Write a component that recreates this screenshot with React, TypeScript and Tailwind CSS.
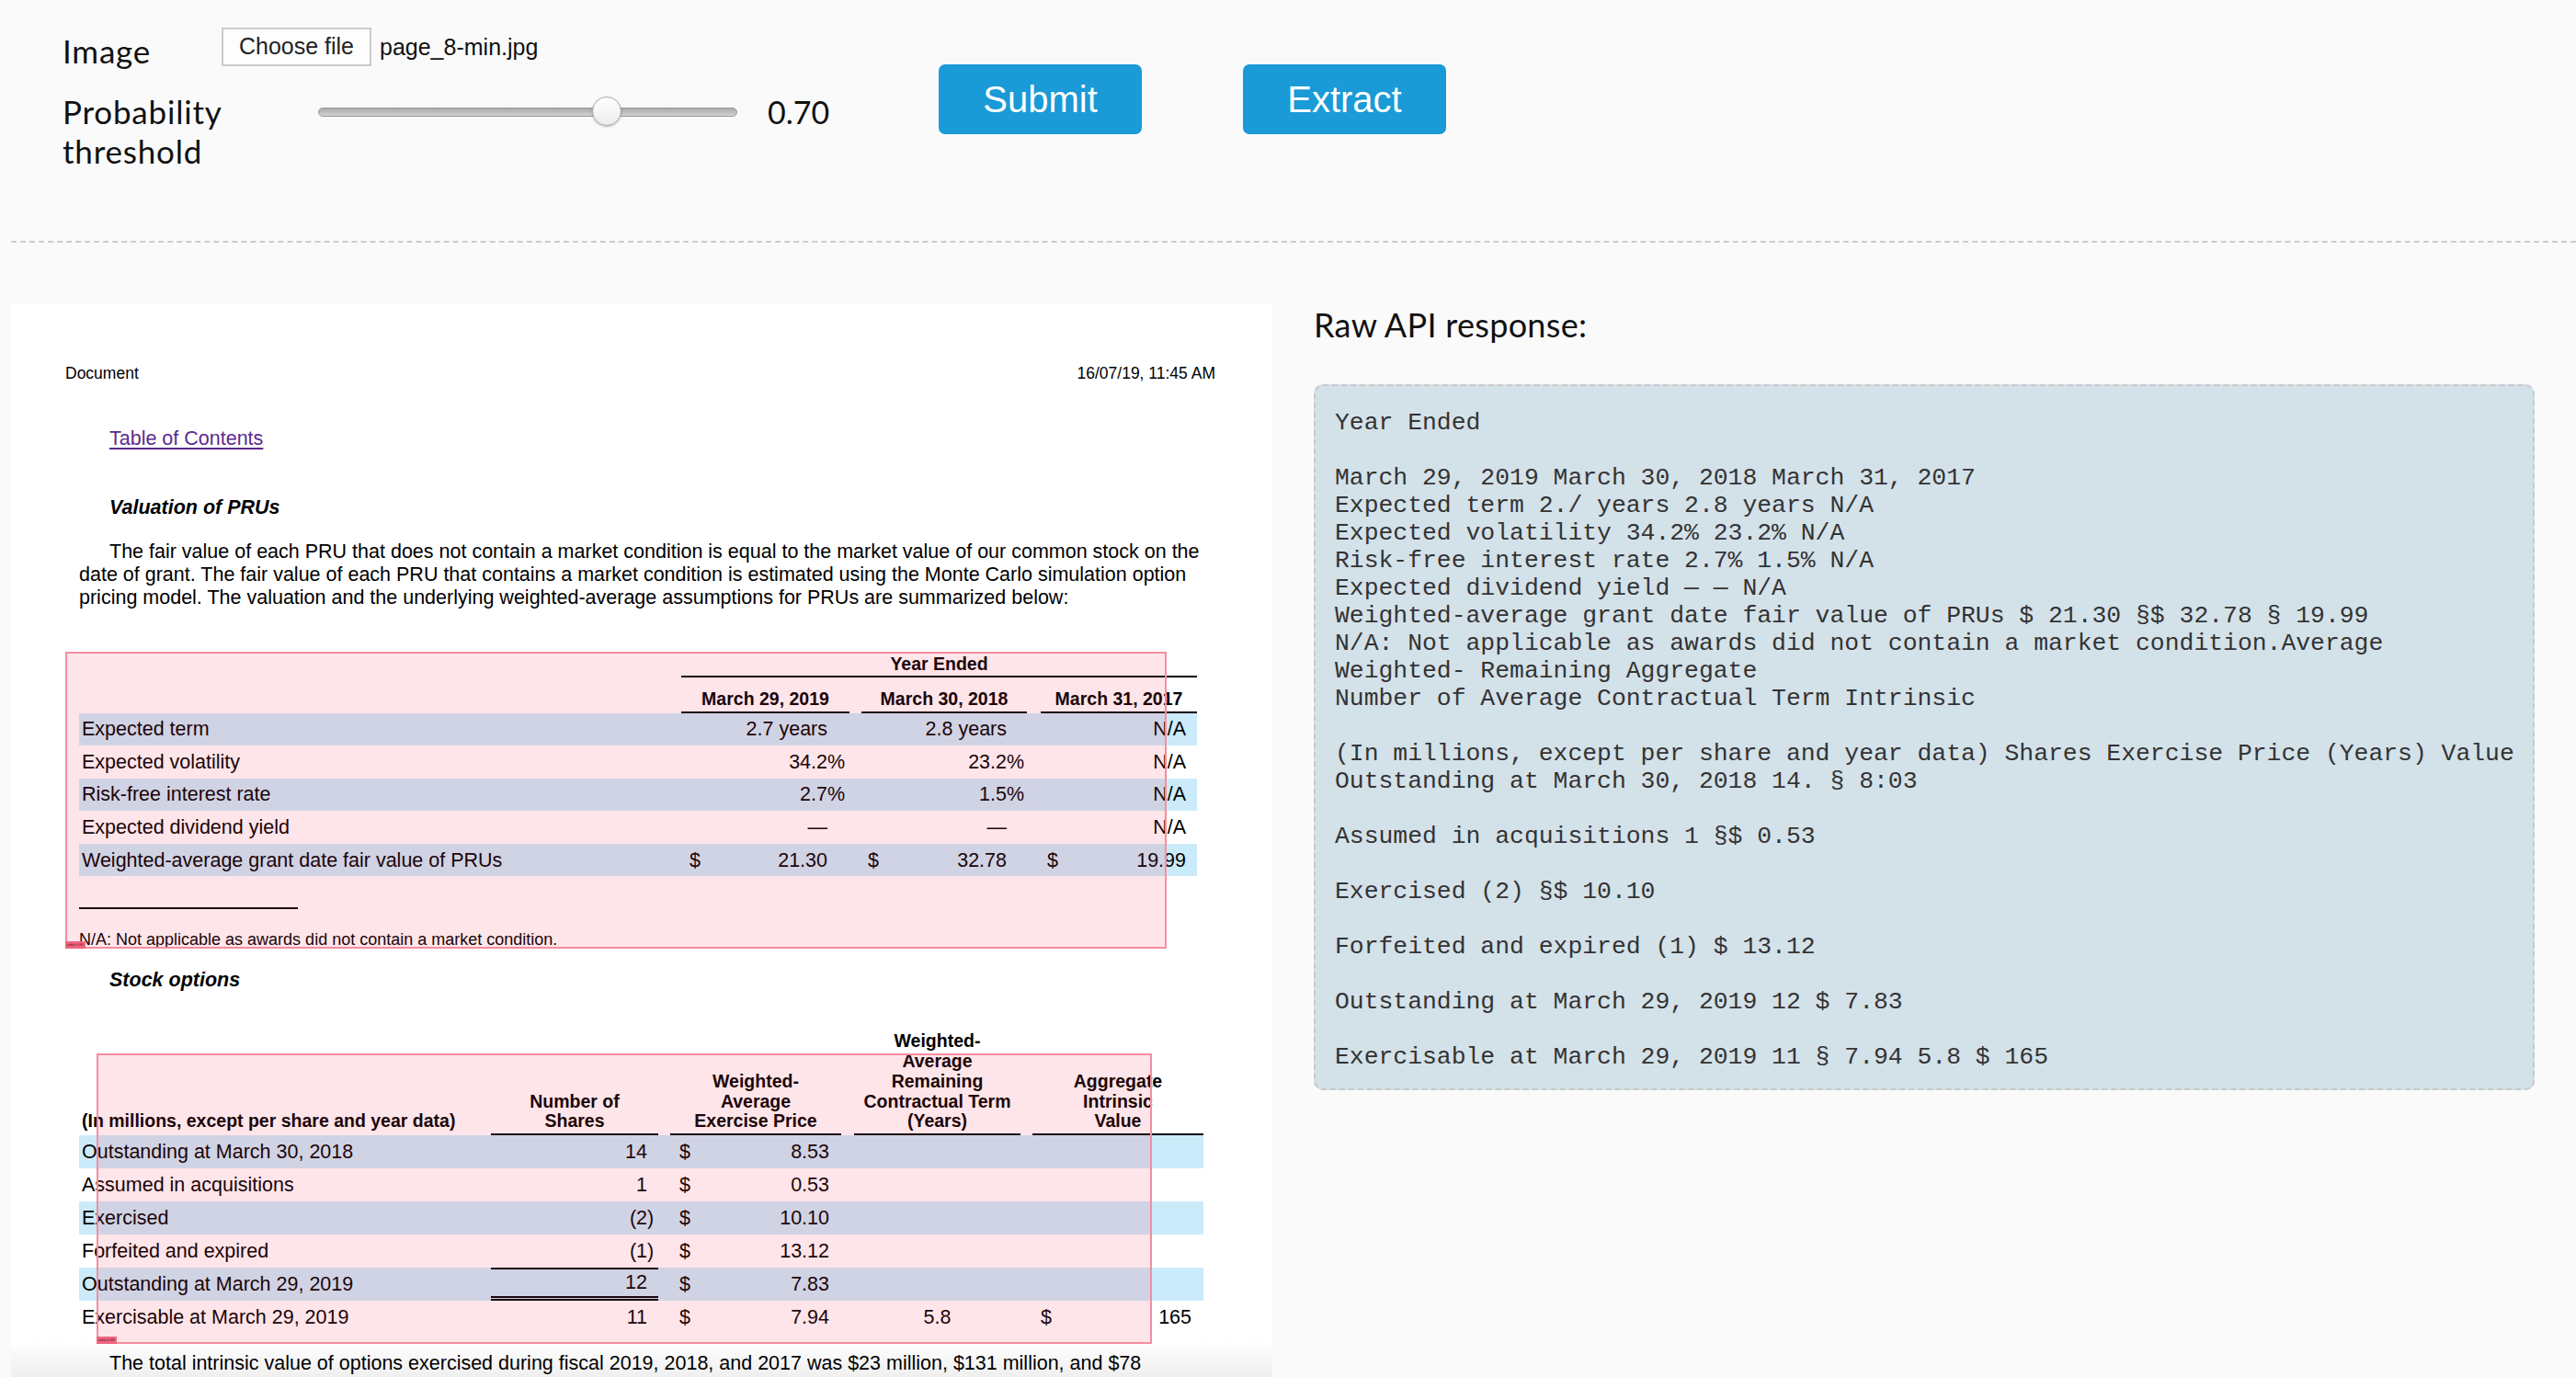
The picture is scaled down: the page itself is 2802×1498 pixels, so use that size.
import React from 'react'

const rawLines = [
  'Year Ended',
  '',
  'March 29, 2019 March 30, 2018 March 31, 2017',
  'Expected term 2./ years 2.8 years N/A',
  'Expected volatility 34.2% 23.2% N/A',
  'Risk-free interest rate 2.7% 1.5% N/A',
  'Expected dividend yield — — N/A',
  'Weighted-average grant date fair value of PRUs $ 21.30 §$ 32.78 § 19.99',
  'N/A: Not applicable as awards did not contain a market condition.Average',
  'Weighted- Remaining Aggregate',
  'Number of Average Contractual Term Intrinsic',
  '',
  '(In millions, except per share and year data) Shares Exercise Price (Years) Value',
  'Outstanding at March 30, 2018 14. § 8:03',
  '',
  'Assumed in acquisitions 1 §$ 0.53',
  '',
  'Exercised (2) §$ 10.10',
  '',
  'Forfeited and expired (1) $ 13.12',
  '',
  'Outstanding at March 29, 2019 12 $ 7.83',
  '',
  'Exercisable at March 29, 2019 11 § 7.94 5.8 $ 165',
]

type PruRow = {
  label: string
  values: [string, string, string]
  suffix?: [string, string]
  dollar?: boolean
  band?: boolean
}

const pruRows: PruRow[] = [
  { label: 'Expected term', values: ['2.7 years', '2.8 years', 'N/A'], band: true },
  { label: 'Expected volatility', values: ['34.2', '23.2', 'N/A'], suffix: ['%', '%'] },
  { label: 'Risk-free interest rate', values: ['2.7', '1.5', 'N/A'], suffix: ['%', '%'], band: true },
  { label: 'Expected dividend yield', values: ['—', '—', 'N/A'] },
  { label: 'Weighted-average grant date fair value of PRUs', values: ['21.30', '32.78', '19.99'], dollar: true, band: true },
]

type OptionRow = {
  label: string
  shares: string
  neg?: boolean
  price: string
  term?: string
  agg?: string
  band?: boolean
  total?: boolean
}

const optionRows: OptionRow[] = [
  { label: 'Outstanding at March 30, 2018', shares: '14', price: '8.53', band: true },
  { label: 'Assumed in acquisitions', shares: '1', price: '0.53' },
  { label: 'Exercised', shares: '(2', neg: true, price: '10.10', band: true },
  { label: 'Forfeited and expired', shares: '(1', neg: true, price: '13.12' },
  { label: 'Outstanding at March 29, 2019', shares: '12', price: '7.83', band: true, total: true },
  { label: 'Exercisable at March 29, 2019', shares: '11', price: '7.94', term: '5.8', agg: '165' },
]

const Overlay = ({ className }: { className: string }) => (
  <div className={`absolute border-2 border-[#f48ea0] bg-[rgba(240,40,70,0.12)] ${className}`}>
    <div className="absolute -left-[2px] -bottom-[2px] w-[22px] h-[8px] bg-[#f0657f] text-[4px] leading-[8px] text-[#5a1020] pl-[2px]">
      table 0.99
    </div>
  </div>
)

const PruTable = () => (
  <div className="mt-[46.5px] ml-[74px] w-[1216px] text-[21.5px]">
    <div className="flex h-[26px]">
      <div className="w-[655px]" />
      <div className="w-[561px] text-center font-bold text-[19.5px] leading-[26px]">Year Ended</div>
    </div>
    <div className="flex h-[40.5px]">
      <div className="w-[655px]" />
      <div className="w-[561px] border-t-2 border-black flex">
        <div className="w-[183px] text-center font-bold text-[19.5px] border-b-2 border-black leading-[30px] pt-[7.5px]">March 29, 2019</div>
        <div className="w-[180px] ml-[13px] text-center font-bold text-[19.5px] border-b-2 border-black leading-[30px] pt-[7.5px]">March 30, 2018</div>
        <div className="w-[170px] ml-[15px] text-center font-bold text-[19.5px] border-b-2 border-black leading-[30px] pt-[7.5px]">March 31, 2017</div>
      </div>
    </div>
    {pruRows.map((r) => (
      <div key={r.label} className={`flex items-center h-[35.6px] ${r.band ? 'bg-[#ccebfa]' : ''}`}>
        <div className="w-[655px] pl-[3px]">{r.label}</div>
        <div className="w-[183px] flex items-center pl-[9px] pr-[4px]">
          {r.dollar && <span>$</span>}
          <span className="ml-auto">{r.values[0]}</span>
          <span className="w-[20px]">{r.suffix ? r.suffix[0] : ''}</span>
        </div>
        <div className="w-[180px] ml-[13px] flex items-center pl-[7px] pr-[2px]">
          {r.dollar && <span>$</span>}
          <span className="ml-auto">{r.values[1]}</span>
          <span className="w-[20px]">{r.suffix ? r.suffix[1] : ''}</span>
        </div>
        <div className="w-[170px] ml-[15px] flex items-center pl-[7px] pr-[12px]">
          {r.dollar && <span>$</span>}
          <span className="ml-auto">{r.values[2]}</span>
        </div>
      </div>
    ))}
    <div className="mt-[34px] w-[238px] border-t-2 border-black" />
    <div className="mt-[22.5px] text-[18px] leading-[21px]">N/A: Not applicable as awards did not contain a market condition.</div>
  </div>
)

const HeadCell = ({ lines, className }: { lines: string[]; className: string }) => (
  <div className={`flex flex-col justify-end text-center font-bold text-[19.5px] leading-[21.7px] border-b-2 border-black pb-[2px] ${className}`}>
    {lines.map((l) => (
      <div key={l}>{l}</div>
    ))}
  </div>
)

const OptionsTable = () => (
  <div className="mt-[39px] ml-[74px] w-[1223px] text-[21.5px]">
    <div className="flex h-[117px]">
      <div className="w-[448px] flex items-end pl-[3px] pb-[4px] font-bold text-[19.5px] leading-[21.7px]">
        (In millions, except per share and year data)
      </div>
      <HeadCell className="w-[182px]" lines={['Number of', 'Shares']} />
      <HeadCell className="w-[186px] ml-[13px]" lines={['Weighted-', 'Average', 'Exercise Price']} />
      <HeadCell className="w-[181px] ml-[14px]" lines={['Weighted-', 'Average', 'Remaining', 'Contractual Term', '(Years)']} />
      <HeadCell className="w-[186px] ml-[13px]" lines={['Aggregate', 'Intrinsic', 'Value']} />
    </div>
    {optionRows.map((r) => (
      <div key={r.label} className={`flex h-[36px] ${r.band ? 'bg-[#ccebfa]' : ''}`}>
        <div className="w-[448px] pl-[3px] flex items-center">{r.label}</div>
        <div
          className={`w-[182px] flex items-center justify-end pr-[4px] ${
            r.total ? 'border-t-2 border-b-[5px] border-double border-black' : ''
          }`}
        >
          <span>{r.shares}</span>
          <span className="w-[8px]">{r.neg ? ')' : ''}</span>
        </div>
        <div className="w-[186px] ml-[13px] flex items-center pl-[10px] pr-[13px]">
          <span>$</span>
          <span className="ml-auto">{r.price}</span>
        </div>
        <div className="w-[181px] ml-[14px] flex items-center justify-center">{r.term ?? ''}</div>
        <div className="w-[186px] ml-[13px] flex items-center pl-[9px] pr-[13px]">
          {r.agg && <span>$</span>}
          <span className="ml-auto">{r.agg ?? ''}</span>
        </div>
      </div>
    ))}
  </div>
)

const DocumentPage = () => (
  <div className="relative w-[1372px] h-[1168px] shrink-0 overflow-hidden bg-[linear-gradient(to_bottom,#ffffff_calc(100%-40px),#efefef)] text-black font-['Liberation_Sans',Arial,sans-serif]">
    <div className="pt-[66px] flex justify-between pl-[59px] pr-[62px] text-[17.5px] leading-[21px]">
      <span>Document</span>
      <span>16/07/19, 11:45 AM</span>
    </div>
    <div className="mt-[47.5px] ml-[107px] text-[21.5px] leading-[25px]">
      <a className="text-[#5b2a8f] underline decoration-[1.5px] underline-offset-[3px]">Table of Contents</a>
    </div>
    <div className="mt-[50px] ml-[107px] text-[21.5px] leading-[25px] font-bold italic">Valuation of PRUs</div>
    <p className="mt-[23px] ml-[74px] text-[21.5px] leading-[25px] indent-[33px] whitespace-nowrap">
      The fair value of each PRU that does not contain a market condition is equal to the market value of our common stock on the
      <br />
      date of grant. The fair value of each PRU that contains a market condition is estimated using the Monte Carlo simulation option
      <br />
      pricing model. The valuation and the underlying weighted-average assumptions for PRUs are summarized below:
    </p>
    <PruTable />
    <div className="mt-[21px] ml-[107px] text-[21.5px] leading-[25px] font-bold italic">Stock options</div>
    <OptionsTable />
    <div className="mt-[20px] ml-[107px] text-[21.5px] leading-[25px] whitespace-nowrap">
      The total intrinsic value of options exercised during fiscal 2019, 2018, and 2017 was $23 million, $131 million, and $78
    </div>

    <Overlay className="left-[59px] top-[379px] w-[1198px] h-[323px]" />
    <Overlay className="left-[93px] top-[816px] w-[1148px] h-[316px]" />
  </div>
)

const BlueButton = ({ label }: { label: string }) => (
  <button className="w-[221px] h-[76px] rounded-[7px] bg-[#1a9ad6] text-white text-[40px] font-['Liberation_Sans',Arial,sans-serif] flex items-center justify-center">
    {label}
  </button>
)

export default function App() {
  return (
    <div className="min-h-screen bg-[#fafafa] text-[#111] font-['Lato',sans-serif]">
      <header className="flex pl-[68px] pt-[30px] h-[262px]">
        <div className="w-[831px] shrink-0">
          <div className="flex items-start h-[42px]">
            <div className="w-[173px] text-[35px] leading-[42px] mt-[4px] tracking-[0.8px]">Image</div>
            <div className="h-[42px] w-[163px] border-2 border-[#cbcbcb] bg-[#fdfdfd] flex items-center justify-center font-['Liberation_Sans',Arial,sans-serif] text-[25px] text-[#222]">
              Choose file
            </div>
            <span className="ml-[9px] font-['Liberation_Sans',Arial,sans-serif] text-[25px] leading-[42px] text-[#111]">page_8-min.jpg</span>
          </div>
          <div className="flex items-start mt-[28px]">
            <div className="w-[278px] text-[35px] leading-[43px] tracking-[0.8px]">
              Probability
              <br />
              threshold
            </div>
            <div className="relative w-[456px] h-[43px] flex items-center">
              <div className="w-full h-[10px] rounded-full border border-[#9a9a9a] bg-linear-to-b from-[#a9a9a9] to-[#d4d4d4]" />
              <div className="absolute left-[298px] top-[5px] w-[32px] h-[32px] rounded-full border border-[#a8a8a8] bg-linear-to-b from-white to-[#ececec] shadow-[0_1px_2px_rgba(0,0,0,0.25)]" />
            </div>
            <div className="ml-[33px] w-[64px] text-[34px] leading-[43px]">0.70</div>
          </div>
        </div>
        <div className="flex ml-[122px] mt-[40px] gap-[110px] items-start">
          <BlueButton label="Submit" />
          <BlueButton label="Extract" />
        </div>
      </header>

      <div className="ml-[12px] border-t-2 border-dashed border-[#cccccc]" />

      <main className="flex pl-[12px] pt-[66px]">
        <DocumentPage />
        <section className="ml-[45px] w-[1328px] shrink-0">
          <h3 className="mt-[3px] text-[36px] leading-[40px] tracking-[0.3px]">Raw API response:</h3>
          <div className="mt-[45px] rounded-[10px] border-2 border-dashed border-[#c9c9c9] bg-[#d3e1e9] px-[21px] pt-[24.5px] pb-[19.5px]">
            <pre className="m-0 font-['Liberation_Mono',monospace] text-[26.4px] leading-[30px] text-[#333] whitespace-pre">
              {rawLines.join('\n')}
            </pre>
          </div>
        </section>
      </main>
    </div>
  )
}
